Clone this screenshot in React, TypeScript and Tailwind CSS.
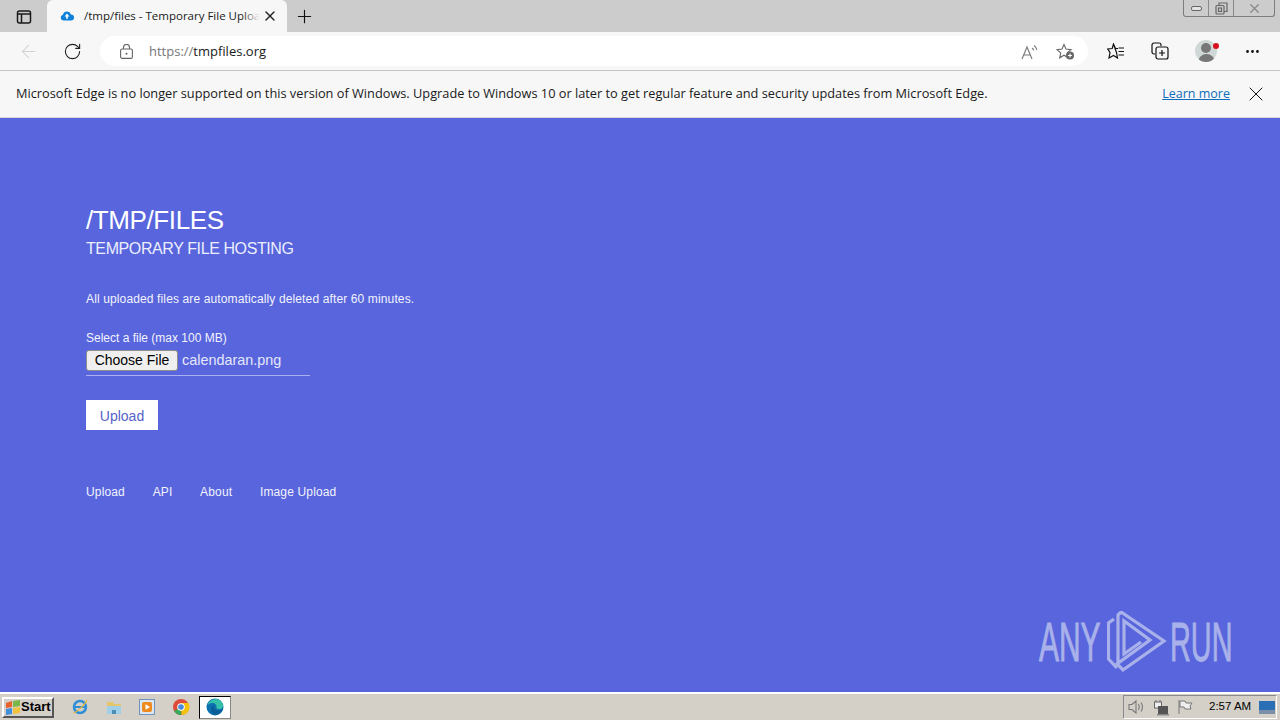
import { Plus, X, RotateCw, ArrowLeft, MoreHorizontal } from 'lucide-react';

const uiFont = "font-['Open_Sans',sans-serif]";

function TabBar() {
  return (
    <div className="flex h-[32px] items-end bg-[#cccccc]">
      <div className="flex h-[32px] w-[47px] items-center justify-center">
        <svg width="16" height="16" viewBox="0 0 16 16" fill="none" stroke="#1a1a1a" strokeWidth="1.5" className="mt-[1px]">
          <rect x="1.5" y="2" width="13" height="12" rx="2" />
          <path d="M1.500 5h13M5.500 5v9" />
        </svg>
      </div>
      <div className="flex h-[32px] w-[240px] items-center rounded-t-[6px] bg-[#f7f7f7] pl-[13px] pr-[9px]">
        <svg width="14" height="12" viewBox="0 0 14 12" fill="#0f7fd8" className="shrink-0">
          <path d="M3.400 10.600a3 3 0 0 1-.4-5.900 4.200 4.200 0 0 1 8-.3 3.100 3.100 0 0 1 0 6.200z" />
          <path d="M7 3.600 4.600 6.400h1.600v2.400h1.600V6.400h1.600z" fill="#fff" />
        </svg>
        <div className="relative ml-[10px] w-[176px] overflow-hidden">
          <span className={`${uiFont} block text-[11.5px] whitespace-nowrap text-[#1a1a1a]`}>/tmp/files - Temporary File Upload</span>
          <div className="absolute top-0 right-0 h-full w-[18px] bg-gradient-to-r from-transparent to-[#f7f7f7]" />
        </div>
        <X size={16} strokeWidth={2} className="ml-auto text-[#222]" />
      </div>
      <div className="flex h-[32px] w-[35px] items-center justify-center">
        <Plus size={21} strokeWidth={1.3} className="text-[#111]" />
      </div>
      <div className="ml-auto mr-[5px] flex h-[17px] w-[92px] self-start rounded-b-[3px] border border-t-0 border-[#7d7d7d] text-[#555]">
        <div className="flex w-[25px] items-center justify-center border-r border-[#8a8a8a]">
          <div className="h-[5px] w-[11px] rounded-[2px] border border-[#666] bg-[#e4e4e4]" />
        </div>
        <div className="flex w-[25px] items-center justify-center border-r border-[#8a8a8a]">
          <svg width="13" height="13" viewBox="0 0 13 13" fill="none" stroke="#666" strokeWidth="1.2">
            <rect x="1" y="3.500" width="8" height="8.500" rx="1" />
            <path d="M4 3.500V1h8v8.500H9" />
            <rect x="3.500" y="6" width="3" height="3.500" />
          </svg>
        </div>
        <div className="flex flex-1 items-center justify-center">
          <X size={15} strokeWidth={2.2} className="text-[#8a8a8a]" />
        </div>
      </div>
    </div>
  );
}

function Toolbar() {
  return (
    <div className="flex h-[39px] items-center border-b border-[#c4c4c4] bg-[#f7f7f7]">
      <div className="flex w-[56px] items-center justify-center">
        <ArrowLeft size={21} strokeWidth={1.2} className="text-[#d2d2d2]" />
      </div>
      <div className="flex w-[32px] items-center justify-center">
        <RotateCw size={19} strokeWidth={1.4} className="text-[#222]" />
      </div>
      <div className="ml-[12px] flex h-[30px] w-[988px] items-center rounded-[15px] bg-white pl-[20px]">
        <svg width="13" height="15" viewBox="0 0 13 15" fill="none" stroke="#666" strokeWidth="1.100">
          <rect x="0.600" y="5" width="11.800" height="9.400" rx="1.500" />
          <path d="M3.500 5V3.500a3 3 0 0 1 6 0V5" />
          <circle cx="6.500" cy="9.700" r="1" fill="#666" stroke="none" />
        </svg>
        <span className={`${uiFont} ml-[16px] mt-[1px] text-[13px] text-[#777]`}>
          https://<span className="text-[#1a1a1a]">tmpfiles.org</span>
        </span>
        <svg width="18" height="16" viewBox="0 0 18 16" fill="none" stroke="#777" strokeWidth="1.100" className="ml-auto mt-[1px] mr-[-1px]">
          <path d="M1 15 6 3l5 12M3 11h6M11 4c1 .7 1.500 1.500 1.700 2.500M13 1.500c1.500 1 2.500 2.500 2.800 4.500" />
        </svg>
        <svg width="20" height="18" viewBox="0 0 20 18" fill="none" stroke="#666" strokeWidth="1.100" className="ml-[18px] mr-[12px] mt-[1px]">
          <path d="M8 1.500l2 4.600 5 .5-3.700 3.300 1 4.900L8 12.200l-4.300 2.600 1-4.900L1 6.600l5-.5z" />
          <circle cx="14" cy="12.500" r="4" fill="#666" stroke="none" />
          <path d="M14 10.500v4M12 12.500h4" stroke="#fff" />
        </svg>
      </div>
      <div className="ml-[10px] flex w-[36px] justify-center">
        <svg width="18" height="16" viewBox="0 0 18 16" fill="none" stroke="#111" strokeWidth="1.200">
          <path d="M6.500 1 8.500 5.500H11M9.500 9.500l1 5.500-4-2.500L2 15l1-5.500L.7 6l4.500-.5L6.500 1z" />
          <path d="M11.500 5H17M11.500 8.500H17M11.500 12H17" />
        </svg>
      </div>
      <div className="ml-[8px] flex w-[36px] justify-center">
        <svg width="18" height="18" viewBox="0 0 18 18" fill="none" stroke="#111" strokeWidth="1.200">
          <path d="M4 12H3a2 2 0 0 1-2-2V3a2 2 0 0 1 2-2h5a2 2 0 0 1 2 2v1" />
          <rect x="5" y="5" width="12" height="12" rx="2" fill="#f7f7f7" />
          <path d="M11 8v6M8 11h6" />
        </svg>
      </div>
      <div className="ml-[10px] flex w-[36px] justify-center">
        <div className="relative h-[22px] w-[22px] rounded-full bg-[#cfd8d6]">
          <div className="absolute inset-0 overflow-hidden rounded-full">
            <div className="mx-auto mt-[3px] h-[10px] w-[10px] rounded-full bg-[#777]" />
            <div className="mx-auto mt-[1px] h-[10px] w-[17px] rounded-t-full bg-[#777]" />
          </div>
          <div className="absolute top-[3px] right-[-2px] h-[6px] w-[6px] rounded-full bg-[#d80f1e]" />
        </div>
      </div>
      <div className="ml-[10px] flex w-[36px] justify-center">
        <MoreHorizontal size={17} strokeWidth={2} className="text-[#111]" />
      </div>
    </div>
  );
}

function InfoBar() {
  return (
    <div className={`${uiFont} flex h-[47px] items-center border-b border-[#d8d8d8] bg-[#f7f7f7] pl-[16px] text-[12.78px] text-[#1a1a1a]`}>
      <span>
        Microsoft Edge is no longer supported on this version of Windows. Upgrade to Windows 10 or later to get regular feature and security updates from Microsoft Edge.
      </span>
      <a className="ml-auto text-[12.5px] text-[#0f6cbd] underline">Learn more</a>
      <X size={24} strokeWidth={1} className="ml-[14px] mr-[12px] text-[#111]" />
    </div>
  );
}

function Watermark() {
  return (
    <div className="absolute right-[49px] bottom-[19px] flex items-center font-['Liberation_Sans',sans-serif] text-[56px] leading-none text-[#a9b1ea] [-webkit-text-stroke:1px_#a9b1ea]">
      <div className="h-[62px] w-[68px] leading-[62px]">
        <span className="inline-block origin-left scale-x-[0.535]">ANY</span>
      </div>
      <svg width="60" height="62" viewBox="0 0 60 62" fill="none" stroke="#a9b1ea" strokeWidth="3.200">
        <path d="M7 8 1.500 12v36L10 57" />
        <path d="M11 53V4l3-3 43 29-41 29-6-6 33-24-26-19v33l17-12" />
      </svg>
      <div className="ml-[3px] h-[62px] w-[61px] leading-[62px]">
        <span className="inline-block origin-left scale-x-[0.515]">RUN</span>
      </div>
    </div>
  );
}

function Page() {
  return (
    <main className="relative flex-1 bg-[#5865dc] pl-[86px] pt-[88px] font-['Liberation_Sans',sans-serif] text-white">
      <h1 className="text-[26px] leading-[28px] tracking-[-0.4px]">/TMP/FILES</h1>
      <h2 className="mt-[3px] text-[16px] leading-[24px] tracking-[-0.4px] text-[#eceefc]">TEMPORARY FILE HOSTING</h2>
      <p className="mt-[30px] text-[12px] leading-[16px] tracking-[0.13px] text-[#f2f3fd]">All uploaded files are automatically deleted after 60 minutes.</p>
      <label className="mt-[23px] block text-[12px] leading-[16px] text-[#f2f3fd]">Select a file (max 100 MB)</label>
      <div className="mt-[4px] flex h-[26px] w-[224px] items-start border-b border-[#a9b1f0] text-[14.4px]">
        <button className="h-[21px] w-[92px] rounded-[3px] border border-[#8f8f8f] bg-[#efefef] text-[14px] leading-[17px] text-black">Choose File</button>
        <span className="ml-[4px] leading-[21px] text-[#e6e8fb]">calendaran.png</span>
      </div>
      <button className="mt-[24px] block h-[30px] w-[72px] bg-white pt-[2px] text-[14px] text-[#5563c9]">Upload</button>
      <nav className="mt-[54px] flex gap-[27.7px] text-[12px] leading-[16px] tracking-[0.15px] text-[#f2f3fd]">
        <a>Upload</a>
        <a>API</a>
        <a>About</a>
        <a>Image Upload</a>
      </nav>
      <Watermark />
    </main>
  );
}

function Taskbar() {
  return (
    <div className="flex h-[28px] items-center border-t-2 border-white bg-[#d4d0c8]">
      <button className="ml-[2px] flex h-[21px] w-[52px] items-center border-2 border-t-white border-l-white border-r-[#555] border-b-[#555] pl-[1px] font-['Liberation_Sans',sans-serif] text-[13px] font-bold text-black">
        <svg width="16" height="15" viewBox="0 0 16 15" className="shrink-0">
          <path d="M1 3 7 1v6L1 8z" fill="#e8622c" />
          <path d="M8 1l7-1v6L8 7z" fill="#7ab648" />
          <path d="M1 9l6-1v6l-6 1z" fill="#3f8fdc" />
          <path d="M8 8l7-1v6l-7 1z" fill="#f3c23c" />
        </svg>
        <span>Start</span>
      </button>
      <div className="ml-[9px] flex items-center">
        <div className="flex w-[34px] justify-center">
          <svg width="18" height="18" viewBox="0 0 18 18" fill="none">
            <circle cx="9" cy="9" r="6" stroke="#2d8fd8" strokeWidth="2.500" />
            <path d="M4 9h10" stroke="#2d8fd8" strokeWidth="2" />
            <path d="M2 15C5 15 14 7 16 2" stroke="#e8b83c" strokeWidth="1.200" />
          </svg>
        </div>
        <div className="flex w-[33px] justify-center">
          <svg width="18" height="16" viewBox="0 0 18 16">
            <path d="M2 3h6l1 2h7v10H2z" fill="#e6c66a" />
            <path d="M2 7h14v8H2z" fill="#9fd0e8" />
            <path d="M7 11h4v4H7z" fill="#4c8fb5" />
          </svg>
        </div>
        <div className="flex w-[34px] justify-center">
          <svg width="16" height="16" viewBox="0 0 16 16">
            <rect x="0.500" y="0.500" width="15" height="15" fill="#dbe6f0" stroke="#6f93bd" />
            <rect x="3" y="3" width="10" height="10" rx="2" fill="#ee8a1e" />
            <path d="M6.500 5.200 11 8l-4.500 2.800z" fill="#fff" />
          </svg>
        </div>
        <div className="flex w-[33px] justify-center">
          <svg width="18" height="18" viewBox="0 0 18 18">
            <circle cx="9" cy="9" r="8" fill="#dd4b3a" />
            <path d="M9 9 2.100 13A8 8 0 0 0 9.600 17z" fill="#3aa757" />
            <path d="M9 5h7.500A8 8 0 0 1 9.600 17z" fill="#f4c20d" />
            <circle cx="9" cy="9" r="3.800" fill="#fff" />
            <circle cx="9" cy="9" r="2.800" fill="#4a89dc" />
          </svg>
        </div>
        <div className="ml-[2px] flex h-[23px] w-[32px] items-center justify-center border border-t-black border-l-black border-r-[#888] border-b-[#888] bg-white">
          <svg width="18" height="18" viewBox="0 0 18 18">
            <circle cx="9" cy="9" r="8.500" fill="#0c6fae" />
            <path d="M9.500 1c4 0 7.500 3 7.500 7 0 2.500-2.500 3.500-5 3-1-.2-1.500-.6-1.700-1.200 1-2.800-1.300-4.800-4.300-4.800-2 0-3.500 1-4.500 2.500C2.500 4 5.500 1 9.500 1z" fill="#35c1a8" />
            <path d="M8 16.500c-2-1-3-3-3-5 0-2 1.200-3.800 3-4.500-1 2 .5 5.500 4.500 5.500 1.500 0 3.300-.5 4.300-1.500-.8 3.500-4 5.500-8.800 5.500z" fill="#0b5d96" />
          </svg>
        </div>
      </div>
      <div className="ml-auto mr-[3px] flex h-[24px] w-[154px] items-center border border-t-[#8a8a8a] border-l-[#8a8a8a] border-r-white border-b-white pl-[4px] font-['Liberation_Sans',sans-serif] text-[11.5px] text-black">
        <svg width="17" height="16" viewBox="0 0 17 16" fill="none" stroke="#777" strokeWidth="1.100">
          <path d="M1 5.500h3L8 2v12l-4-3.500H1zM10.500 5c1 1.800 1 4.200 0 6M13 3.500c1.800 2.800 1.800 6.200 0 9" />
        </svg>
        <svg width="17" height="17" viewBox="0 0 17 17" className="ml-[8px]">
          <path d="M3 1v6M7 1v6" stroke="#666" />
          <rect x="1.500" y="3" width="7" height="6" fill="#eee" stroke="#666" />
          <rect x="5" y="7" width="10" height="8" fill="#555" />
          <rect x="4" y="15" width="12" height="1.500" fill="#888" />
        </svg>
        <svg width="16" height="16" viewBox="0 0 16 16" fill="#eee" stroke="#777" className="ml-[7px]">
          <path d="M2 1v14" />
          <path d="M3 2h5l1 2h6l-2 3 1 3H8L7 8H3z" />
        </svg>
        <span className="ml-[16px]">2:57 AM</span>
        <svg width="16" height="13" viewBox="0 0 16 13" className="ml-auto mr-[1px]">
          <rect width="16" height="11" fill="#2a6fb5" />
          <rect y="9" width="16" height="4" fill="#7b8fa8" />
        </svg>
      </div>
    </div>
  );
}

export default function App() {
  return (
    <div className="flex h-screen flex-col overflow-hidden">
      <TabBar />
      <Toolbar />
      <InfoBar />
      <Page />
      <Taskbar />
    </div>
  );
}
